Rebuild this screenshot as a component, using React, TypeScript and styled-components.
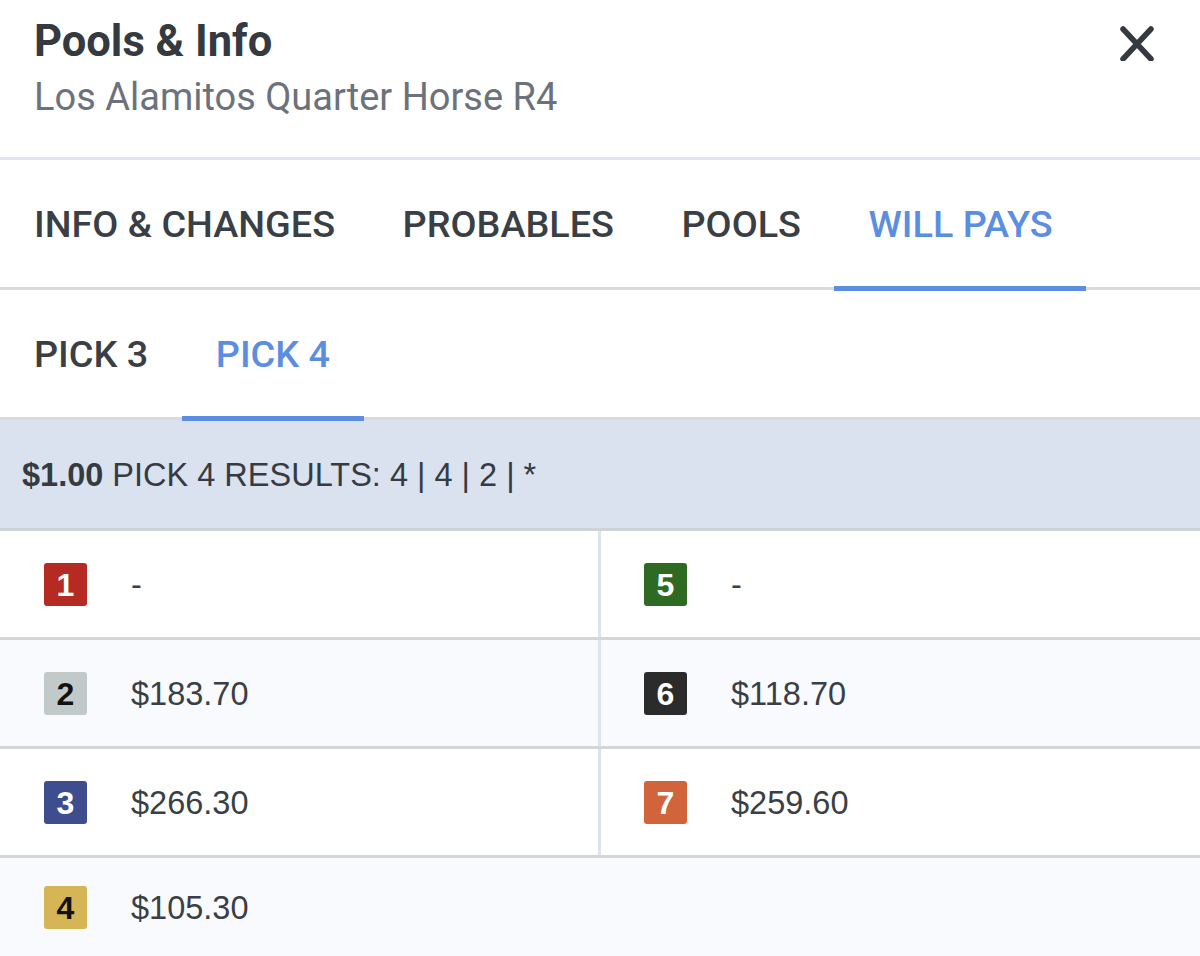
import React from "react";
import styled, { createGlobalStyle } from "styled-components";

const GlobalStyle = createGlobalStyle`
  html, body { margin: 0; padding: 0; background: #ffffff; }
  body { font-family: Roboto, "Liberation Sans", Arial, sans-serif; color: #363b42; overflow: hidden; }
  * { box-sizing: border-box; }
`;

const Page = styled.div`
  width: 1200px;
  height: 956px;
  display: flex;
  flex-direction: column;
  background: #ffffff;
`;

const Header = styled.header`
  height: 160px;
  flex: none;
  display: flex;
  justify-content: space-between;
  align-items: flex-start;
  padding: 17px 0 0 34px;
  border-bottom: 3px solid #dfe5ee;
`;

const TitleBlock = styled.div`
  display: flex;
  flex-direction: column;
  gap: 8px;
`;

const Title = styled.h1`
  margin: 0;
  font-family: Roboto, sans-serif;
  font-weight: 700;
  font-size: 43.5px;
  line-height: 50px;
  color: #353a41;
`;

const Subtitle = styled.div`
  font-family: Roboto, sans-serif;
  font-weight: 400;
  font-size: 38px;
  line-height: 44px;
  color: #6c727b;
`;

const CloseButton = styled.button`
  border: none;
  background: none;
  padding: 0;
  margin: 8px 46px 0 0;
  width: 36px;
  height: 36px;
  display: flex;
  align-items: center;
  justify-content: center;
  color: #353a41;
  cursor: pointer;
`;

const TabBar = styled.nav<{ $height: number; $line: string }>`
  height: ${(p) => p.$height}px;
  flex: none;
  display: flex;
  align-items: stretch;
  border-bottom: 3px solid ${(p) => p.$line};
`;

const Tab = styled.div<{ $active?: boolean }>`
  position: relative;
  display: flex;
  align-items: center;
  padding: 0 33.5px 0 34px;
  font-family: Roboto, sans-serif;
  font-weight: 500;
  font-size: 37.8px;
  text-transform: uppercase;
  color: ${(p) => (p.$active ? "#5b8ee0" : "#3a3f45")};
  &::after {
    content: "";
    display: ${(p) => (p.$active ? "block" : "none")};
    position: absolute;
    left: 0;
    right: 0;
    bottom: -4px;
    height: 5px;
    background: #5b8ee0;
  }
`;

const ResultsBar = styled.div`
  height: 111px;
  flex: none;
  display: flex;
  align-items: center;
  padding: 2px 0 0 22px;
  background: #d9e2ee;
  border-bottom: 3px solid #cfd3d8;
  font-family: "Liberation Sans", Arial, sans-serif;
  font-size: 32.5px;
  color: #363b42;
`;

const Strong = styled.strong`
  font-weight: 700;
  margin-right: 9px;
`;

const Grid = styled.div`
  display: flex;
  flex-direction: column;
  flex: 1;
`;

const Row = styled.div<{ $shaded: boolean; $last?: boolean }>`
  height: ${(p) => (p.$last ? 98 : 109)}px;
  flex: none;
  display: flex;
  background: ${(p) => (p.$shaded ? "#f8fafd" : "#ffffff")};
  border-bottom: ${(p) => (p.$last ? "none" : "3px solid #d3d5d8")};
`;

const Cell = styled.div<{ $divider?: boolean; $pad: number }>`
  width: ${(p) => (p.$divider ? 601 : 599)}px;
  display: flex;
  align-items: center;
  padding-left: ${(p) => p.$pad}px;
  gap: 44px;
  border-right: ${(p) => (p.$divider ? "3px solid #dce3ee" : "none")};
`;

const Badge = styled.div<{ $bg: string; $fg: string }>`
  width: 43px;
  height: 43px;
  flex: none;
  border-radius: 3px;
  background: ${(p) => p.$bg};
  color: ${(p) => p.$fg};
  display: flex;
  align-items: center;
  justify-content: center;
  font-family: "Liberation Sans", Arial, sans-serif;
  font-weight: 700;
  font-size: 32px;
  padding-top: 2px;
`;

const Value = styled.span`
  font-family: "Liberation Sans", Arial, sans-serif;
  font-size: 32.5px;
  color: #3a3f45;
  padding-top: 2px;
`;

type Entry = { n: number; bg: string; fg: string; value: string };

const entries: Record<number, Entry> = {
  1: { n: 1, bg: "#b52a23", fg: "#ffffff", value: "-" },
  2: { n: 2, bg: "#c2c9c9", fg: "#111111", value: "$183.70" },
  3: { n: 3, bg: "#3e4d8d", fg: "#ffffff", value: "$266.30" },
  4: { n: 4, bg: "#d5b556", fg: "#111111", value: "$105.30" },
  5: { n: 5, bg: "#2e6a22", fg: "#ffffff", value: "-" },
  6: { n: 6, bg: "#2b2b2b", fg: "#ffffff", value: "$118.70" },
  7: { n: 7, bg: "#d2643b", fg: "#ffffff", value: "$259.60" },
};

const rows: [number, number | null][] = [
  [1, 5],
  [2, 6],
  [3, 7],
  [4, null],
];

const Runner = ({ e }: { e: Entry }) => (
  <>
    <Badge $bg={e.bg} $fg={e.fg}>{e.n}</Badge>
    <Value>{e.value}</Value>
  </>
);

export default function App() {
  return (
    <Page>
      <GlobalStyle />
      <Header>
        <TitleBlock>
          <Title>Pools &amp; Info</Title>
          <Subtitle>Los Alamitos Quarter Horse R4</Subtitle>
        </TitleBlock>
        <CloseButton aria-label="Close">
          <svg width="36" height="36" viewBox="0 0 36 36" fill="none">
            <path
              d="M5 4 L33 34 M33 4 L5 34"
              stroke="currentColor"
              strokeWidth="5.5"
              strokeLinecap="round"
            />
          </svg>
        </CloseButton>
      </Header>
      <TabBar $height={130} $line="#d8dadd">
        <Tab>Info &amp; Changes</Tab>
        <Tab>Probables</Tab>
        <Tab>Pools</Tab>
        <Tab $active>Will Pays</Tab>
      </TabBar>
      <TabBar $height={130} $line="#d8dadd">
        <Tab>Pick 3</Tab>
        <Tab $active>Pick 4</Tab>
      </TabBar>
      <ResultsBar>
        <Strong>$1.00</Strong>PICK 4 RESULTS: 4 | 4 | 2 | *
      </ResultsBar>
      <Grid>
        {rows.map(([l, r], i) => (
          <Row key={i} $shaded={i % 2 === 1} $last={i === rows.length - 1}>
            <Cell $divider={r !== null} $pad={44}>
              <Runner e={entries[l]} />
            </Cell>
            {r !== null && (
              <Cell $pad={43}>
                <Runner e={entries[r]} />
              </Cell>
            )}
          </Row>
        ))}
      </Grid>
    </Page>
  );
}
